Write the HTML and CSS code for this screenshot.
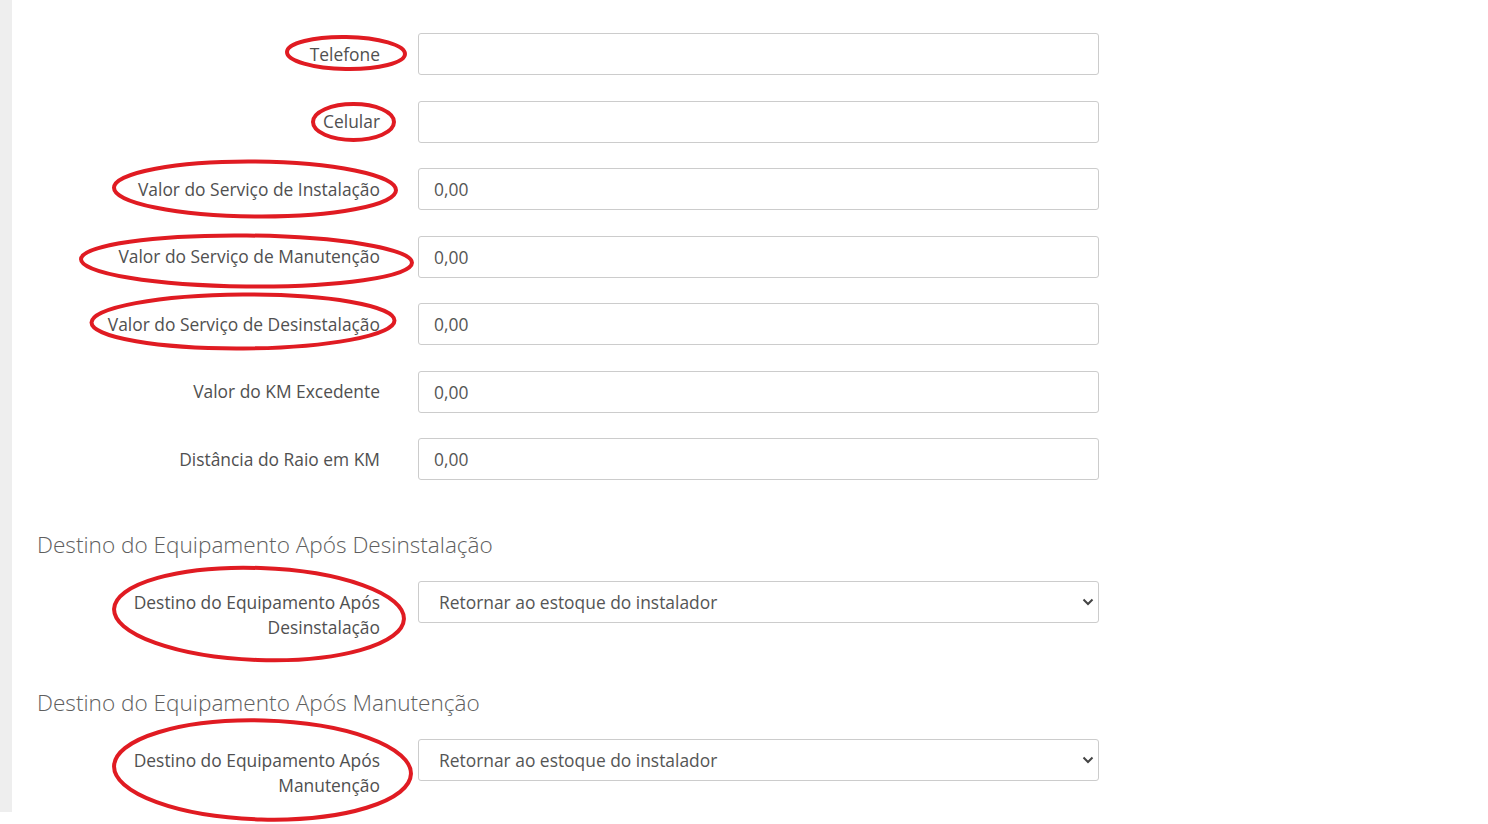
FILE: index.html
```html
<!DOCTYPE html>
<html lang="pt-BR">
<head>
  <meta charset="UTF-8">
  <title>Cadastro de Instalador</title>
  <link rel="stylesheet" href="styles.css">
</head>
<body>
  <div class="page">
    <aside class="side-strip"></aside>

    <main class="content">
      <div class="form-row">
        <label class="row-label">Telefone</label>
        <input class="form-control" type="text" value="">
      </div>
      <div class="form-row">
        <label class="row-label">Celular</label>
        <input class="form-control" type="text" value="">
      </div>
      <div class="form-row">
        <label class="row-label">Valor do Serviço de Instalação</label>
        <input class="form-control" type="text" value="0,00">
      </div>
      <div class="form-row">
        <label class="row-label">Valor do Serviço de Manutenção</label>
        <input class="form-control" type="text" value="0,00">
      </div>
      <div class="form-row">
        <label class="row-label">Valor do Serviço de Desinstalação</label>
        <input class="form-control" type="text" value="0,00">
      </div>
      <div class="form-row">
        <label class="row-label">Valor do KM Excedente</label>
        <input class="form-control" type="text" value="0,00">
      </div>
      <div class="form-row">
        <label class="row-label">Distância do Raio em KM</label>
        <input class="form-control" type="text" value="0,00">
      </div>

      <h3 class="section-title">Destino do Equipamento Após Desinstalação</h3>
      <div class="form-row">
        <label class="row-label">Destino do Equipamento Após Desinstalação</label>
        <div class="select-wrap">
          <select class="form-control">
            <option>Retornar ao estoque do instalador</option>
          </select>
          <svg class="caret" width="12" height="8" viewBox="0 0 12 8"><path d="M1.5 1.5 L6 6 L10.5 1.5" fill="none" stroke="#444" stroke-width="2"/></svg>
        </div>
      </div>

      <h3 class="section-title second">Destino do Equipamento Após Manutenção</h3>
      <div class="form-row">
        <label class="row-label">Destino do Equipamento Após Manutenção</label>
        <div class="select-wrap">
          <select class="form-control">
            <option>Retornar ao estoque do instalador</option>
          </select>
          <svg class="caret" width="12" height="8" viewBox="0 0 12 8"><path d="M1.5 1.5 L6 6 L10.5 1.5" fill="none" stroke="#444" stroke-width="2"/></svg>
        </div>
      </div>
    </main>

    <!-- marcações em vermelho sobre os campos -->
    <svg class="marks" width="1488" height="824" viewBox="0 0 1488 824">
      <ellipse cx="346" cy="53" rx="59" ry="16" transform="rotate(1 346 53)"/>
      <ellipse cx="353.5" cy="122" rx="40.5" ry="18"/>
      <ellipse cx="255" cy="189" rx="141" ry="27.5" transform="rotate(0.5 255 189)"/>
      <ellipse cx="246.5" cy="261" rx="165.5" ry="25.5" transform="rotate(0.6 246.5 261)"/>
      <ellipse cx="243" cy="321.5" rx="151.5" ry="27" transform="rotate(-0.4 243 321.5)"/>
      <ellipse cx="259" cy="614" rx="145" ry="46" transform="rotate(2 259 614)"/>
      <ellipse cx="262.5" cy="770" rx="148.5" ry="49.5" transform="rotate(1.5 262.5 770)"/>
    </svg>
  </div>
</body>
</html>
```

FILE: styles.css
```css
* {
  margin: 0;
  padding: 0;
  box-sizing: border-box;
}
body {
  font-family: "Open Sans", "Liberation Sans", sans-serif;
  background-color: #fff;
  color: #555;
  overflow: hidden;
}
.page {
  position: relative;
  display: flex;
  width: 1488px;
  height: 824px;
}
.side-strip {
  width: 12px;
  height: 812px;
  background-color: #eeeeee;
}
.content {
  padding: 33px 0 0 25px;
}

/* linhas do formulário */
.form-row {
  display: grid;
  grid-template-columns: 343px 681px;
  column-gap: 38px;
  align-items: start;
  margin-bottom: 25.5px;
}
.row-label {
  text-align: right;
  font-size: 17.4px;
  line-height: 25px;
  padding-top: 8.5px;
  color: #505050;
}
.form-control {
  width: 100%;
  height: 42px;
  border: 1px solid #ccc;
  border-radius: 3px;
  padding: 0 15px;
  font-family: inherit;
  font-size: 17.4px;
  color: #555;
  background-color: #fff;
  outline: none;
}
.select-wrap {
  position: relative;
}
.select-wrap select {
  -webkit-appearance: none;
  appearance: none;
  padding-left: 20px;
}
.caret {
  position: absolute;
  right: 5px;
  top: 17px;
}

.section-title {
  font-size: 22.6px;
  font-weight: 300;
  line-height: 33px;
  color: #5e5e5e;
  margin: 47.5px 0 20.5px;
}
.section-title.second {
  margin-top: 46px;
}

/* marcações */
.marks {
  position: absolute;
  top: 0;
  left: 0;
  pointer-events: none;
}
.marks ellipse {
  fill: none;
  stroke: #e01b22;
  stroke-width: 4;
}
```
